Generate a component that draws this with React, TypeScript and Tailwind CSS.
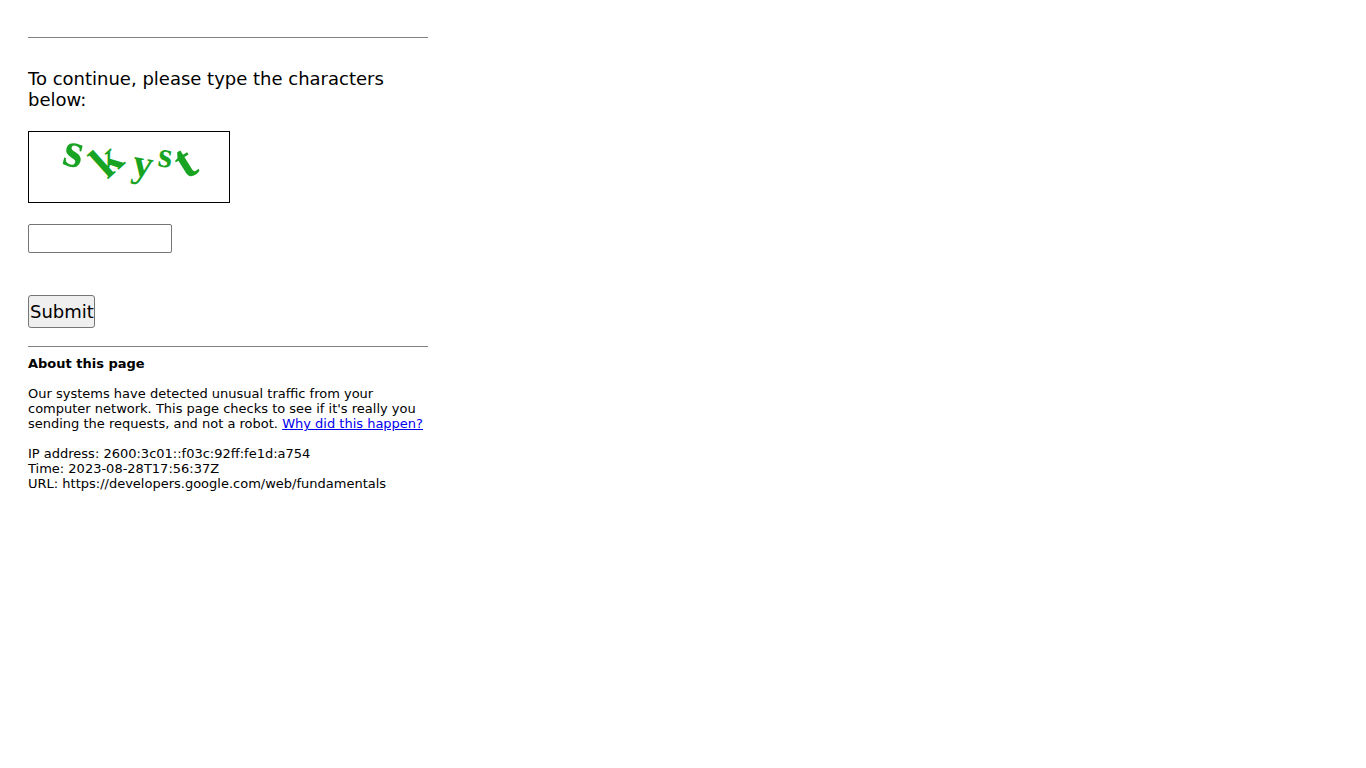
const captchaLetters = [
    { char: 's', x: 32, y: 32, rotate: 14, size: 50 },
    { char: 'k', x: 78, y: 48, rotate: -42, size: 46 },
    { char: 'y', x: 102, y: 43, rotate: 10, size: 40 },
    { char: 's', x: 128, y: 34, rotate: 8, size: 36 },
    { char: 't', x: 157, y: 48, rotate: -32, size: 50 },
];

const details = [
    { label: 'IP address', value: '2600:3c01::f03c:92ff:fe1d:a754' },
    { label: 'Time', value: '2023-08-28T17:56:37Z' },
    { label: 'URL', value: 'https://developers.google.com/web/fundamentals' },
];

const CaptchaImage = () => (
    <div className="w-fit border border-black">
        <svg width="200" height="70" viewBox="0 0 200 70" className="block overflow-visible">
            <g fill="#18a422" fontFamily="'Liberation Serif', serif">
                {captchaLetters.map(({ char, x, y, rotate, size }, idx) => (
                    <text key={idx} x={x} y={y} rotate={rotate} fontSize={size} fontWeight="700">
                        {char}
                    </text>
                ))}
            </g>
        </svg>
    </div>
);

const App = () => {
    return (
        <main className="max-w-[456px] px-7 pt-[37px] font-['DejaVu_Sans',sans-serif] text-black">
            <hr className="border-[#808080]" />
            <form onSubmit={(e) => e.preventDefault()} className="flex flex-col items-start pt-[30px] pb-[18px] text-lg leading-[21px]">
                <label htmlFor="captcha">To continue, please type the characters below:</label>
                <div className="py-[21px]">
                    <CaptchaImage />
                </div>
                <input
                    id="captcha"
                    name="captcha"
                    type="text"
                    autoComplete="off"
                    className="h-[29px] w-36 rounded-xs border border-[#767676] bg-white px-0.5"
                />
                <button
                    type="submit"
                    className="mt-[42px] h-[33px] rounded-[3px] border border-[#767676] bg-[#efefef] pl-px"
                >
                    Submit
                </button>
            </form>
            <hr className="border-[#808080]" />
            <div className="space-y-[15px] pt-[9px] text-[13px] leading-[15px]">
                <h2 className="font-bold">About this page</h2>
                <p>
                    Our systems have detected unusual traffic from your computer network. This page checks to see if
                    it's really you sending the requests, and not a robot.{' '}
                    <a href="#why" className="text-[#0000ee] underline">Why did this happen?</a>
                </p>
                <div>
                    {details.map((item) => (
                        <p key={item.label}>
                            {item.label}: {item.value}
                        </p>
                    ))}
                </div>
            </div>
        </main>
    );
};

export default App;
